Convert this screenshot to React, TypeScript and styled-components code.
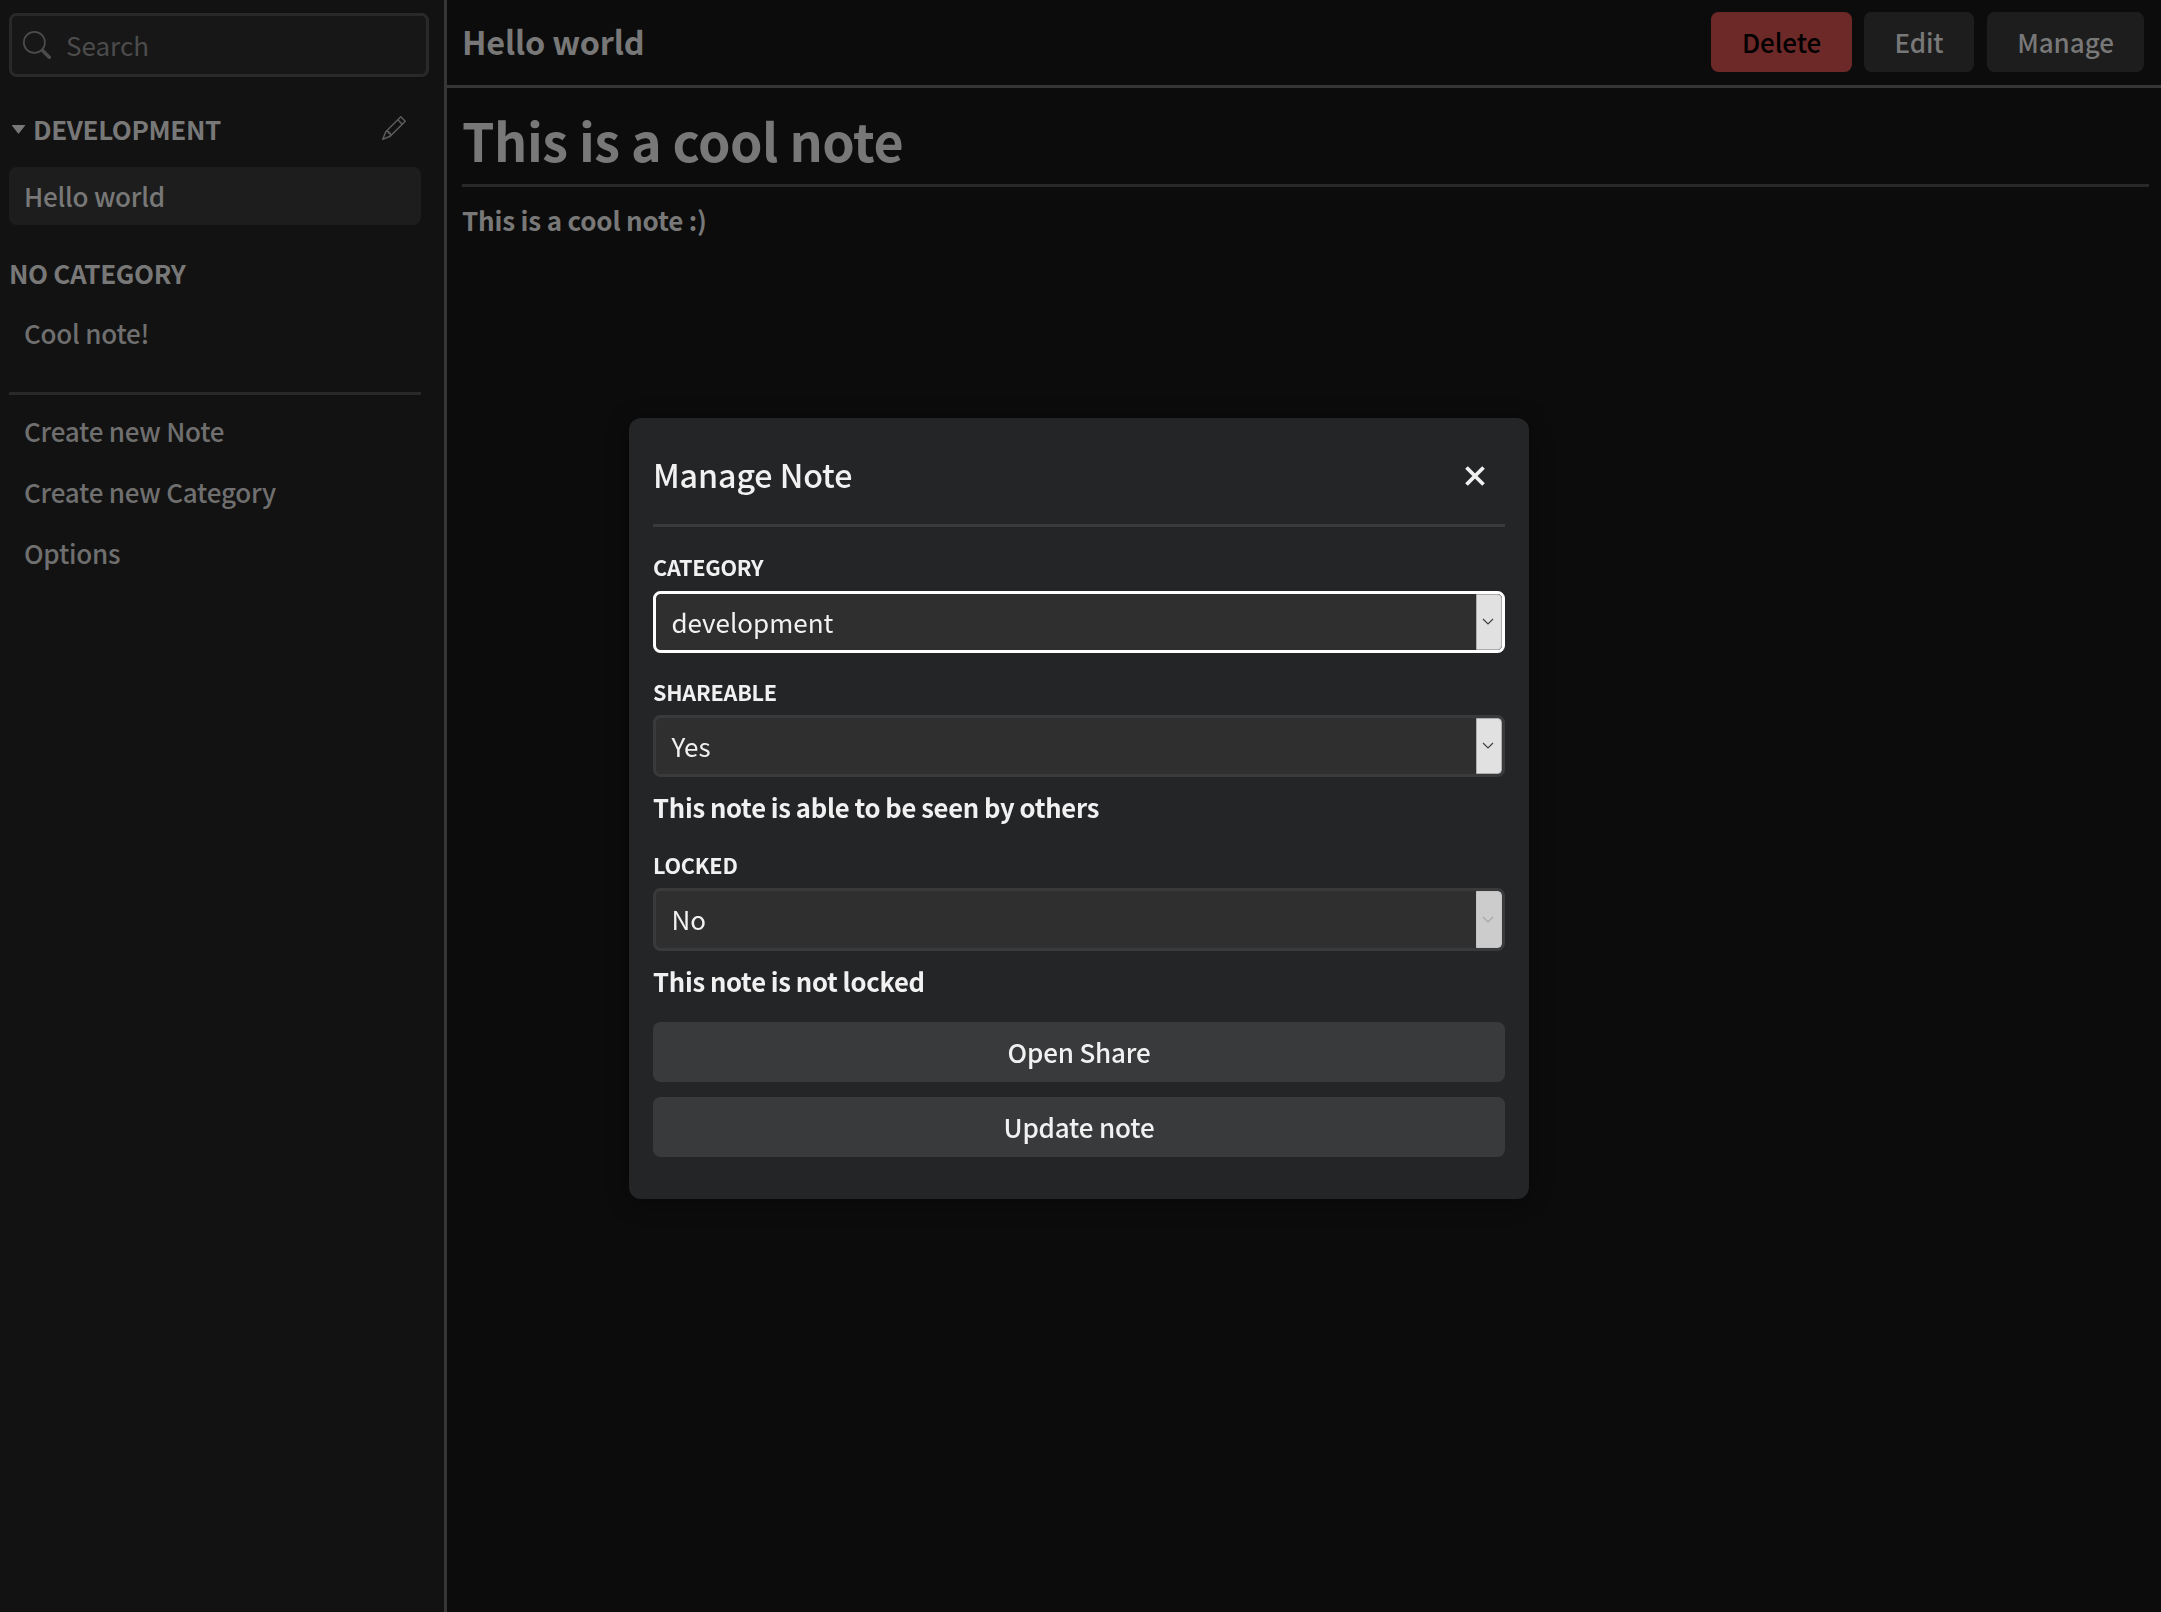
import React from "react";
import styled, { createGlobalStyle, css } from "styled-components";

const font = `"Noto Sans CJK JP", "Noto Sans", sans-serif`;

const GlobalStyle = createGlobalStyle`
  *, *::before, *::after { box-sizing: border-box; }
  html, body { margin: 0; padding: 0; background: #0c0c0c; }
  body { font-family: ${font}; font-size: 26px; color: #787878; overflow: hidden; }
  button, input, select { font: inherit; color: inherit; letter-spacing: inherit; }
  h1, h2, h3, p { margin: 0; }
`;

const Layout = styled.div`
  display: flex;
  height: 100vh;
`;

const Sidebar = styled.aside`
  width: 447px;
  flex: none;
  padding: 13px 15px 0 9px;
  background: #121212;
  border-right: 3px solid #363636;
`;

const SearchBox = styled.label`
  display: flex;
  align-items: center;
  height: 64px;
  padding-left: 11px;
  background: #171717;
  border: 3px solid #292929;
  border-radius: 7.5px;
  color: #4c4c4c;
`;

const SearchInput = styled.input`
  flex: 1;
  min-width: 0;
  margin-left: 15px;
  padding: 0 0 2px;
  height: 58px;
  border: 0;
  outline: 0;
  background: none;
  &::placeholder { color: #4c4c4c; opacity: 1; }
`;

const SidebarBody = styled.div`
  padding-right: 8px;
`;

const Category = styled.h3<{ $top: number }>`
  display: flex;
  align-items: center;
  height: 38px;
  margin-top: ${(p) => p.$top}px;
  font-size: 26px;
  line-height: 38px;
  font-weight: 700;
  letter-spacing: -0.37px;
  text-transform: uppercase;
`;

const Caret = styled.span`
  width: 14px;
  height: 9px;
  margin: 1px 7.5px 0 2.5px;
  background: #787878;
  clip-path: polygon(0 0, 100% 0, 50% 100%);
`;

const PencilButton = styled.button`
  display: flex;
  margin: 0 15px 2px auto;
  padding: 0;
  border: 0;
  background: none;
  color: #5c5c5c;
`;

const Item = styled.a<{ $active?: boolean; $top?: number }>`
  display: block;
  height: 58px;
  margin-top: ${(p) => p.$top ?? 3}px;
  padding-left: 15px;
  border-radius: 7.5px;
  line-height: 58px;
  font-weight: 500;
  letter-spacing: -0.23px;
  color: #6f6f6f;
  ${(p) => p.$active && css`
    background: #1d1d1d;
    color: #787878;
  `}
`;

const SidebarRule = styled.div`
  height: 3px;
  margin-top: 30px;
  background: #292929;
`;

const Main = styled.main`
  flex: 1;
  min-width: 0;
`;

const TopBar = styled.header`
  display: flex;
  align-items: flex-start;
  height: 88px;
  padding: 12px 17px 0 15px;
  border-bottom: 3px solid #363636;
`;

const NoteName = styled.h2`
  margin-right: auto;
  font-size: 32.4px;
  line-height: 57px;
  font-weight: 700;
  letter-spacing: -0.2px;
`;

const TopButton = styled.button<{ $width: number; $danger?: boolean; $gap?: number }>`
  width: ${(p) => p.$width}px;
  height: 60px;
  margin-left: ${(p) => p.$gap ?? 12}px;
  padding: 0 0 2px;
  border: 0;
  border-radius: 7.5px;
  font-weight: 500;
  letter-spacing: -0.07px;
  background: ${(p) => (p.$danger ? "#6d2828" : "#1d1d1d")};
  color: ${(p) => (p.$danger ? "#000" : "#787878")};
`;

const Article = styled.article`
  padding: 15px 12px 0 15px;
`;

const NoteTitle = styled.h1`
  height: 84px;
  border-bottom: 3px solid #292929;
  font-size: 52px;
  line-height: 74px;
  font-weight: 700;
  letter-spacing: -0.45px;
`;

const NoteText = styled.p`
  margin-top: 13px;
  line-height: 39px;
  font-weight: 700;
  letter-spacing: -0.2px;
`;

const Overlay = styled.div`
  position: fixed;
  inset: 0;
  padding-top: 418px;
`;

const Modal = styled.section`
  width: 900px;
  height: 781px;
  margin-left: 629px;
  padding: 24px 24px 0;
  border-radius: 12px;
  background: #242527;
  color: #f1f1f1;
  box-shadow: 0 3px 22px rgba(0, 0, 0, 0.4);
`;

const ModalHeader = styled.header`
  display: flex;
  align-items: center;
  justify-content: space-between;
  height: 85px;
  padding: 0 20px 14px 0;
  border-bottom: 3px solid #393a3c;
`;

const ModalTitle = styled.h2`
  padding-bottom: 5px;
  font-size: 32.2px;
  line-height: 48px;
  font-weight: 500;
  letter-spacing: -0.1px;
`;

const CloseButton = styled.button`
  display: flex;
  padding: 0;
  border: 0;
  background: none;
`;

const FieldLabel = styled.label<{ $top: number }>`
  display: block;
  margin-top: ${(p) => p.$top}px;
  font-size: 21.6px;
  line-height: 32px;
  font-weight: 700;
  letter-spacing: -0.23px;
  text-transform: uppercase;
`;

const SelectBox = styled.div<{ $focused?: boolean; $height?: number; $top?: number }>`
  display: flex;
  justify-content: space-between;
  height: ${(p) => p.$height ?? 62}px;
  margin-top: ${(p) => p.$top ?? 7}px;
  padding-left: 15.4px;
  border: 3px solid ${(p) => (p.$focused ? "#fff" : "#393a3c")};
  border-radius: 7.5px;
  background: #2f2f2f;
  line-height: 56px;
  overflow: hidden;
`;

const DropButton = styled.span<{ $disabled?: boolean }>`
  display: flex;
  align-items: center;
  justify-content: center;
  width: 26px;
  padding: 0 2px 1px 0;
  border: 1px solid ${(p) => (p.$disabled ? "#c4c4c4" : "#adadad")};
  border-radius: 0 4px 4px 0;
  background: ${(p) => (p.$disabled ? "#cccccc" : "#e1e1e1")};
  color: ${(p) => (p.$disabled ? "#a8a8a8" : "#404040")};
`;

const Hint = styled.p`
  margin-top: 10px;
  font-size: 25.6px;
  line-height: 40px;
  font-weight: 700;
  letter-spacing: -0.25px;
  word-spacing: -0.5px;
`;

const ModalButton = styled.button<{ $top: number }>`
  display: block;
  width: 100%;
  height: 60px;
  margin-top: ${(p) => p.$top}px;
  padding: 0 0 1px;
  border: 0;
  border-radius: 7.5px;
  background: #393a3c;
  font-weight: 500;
  letter-spacing: -0.18px;
`;

const SearchIcon = () => (
  <svg width="28" height="28" viewBox="0 0 16 16" fill="currentColor">
    <path d="M10.442 10.442a1 1 0 0 1 1.415 0l3.85 3.85a1 1 0 0 1-1.414 1.415l-3.85-3.85a1 1 0 0 1 0-1.415z" />
    <path d="M6.5 12a5.5 5.5 0 1 0 0-11 5.5 5.5 0 0 0 0 11zM13 6.5a6.5 6.5 0 1 1-13 0 6.5 6.5 0 0 1 13 0z" />
  </svg>
);

const PencilIcon = () => (
  <svg width="24" height="24" viewBox="0 0 16 16" fill="currentColor">
    <path d="M12.146.146a.5.5 0 0 1 .708 0l3 3a.5.5 0 0 1 0 .708l-10 10a.5.5 0 0 1-.168.11l-5 2a.5.5 0 0 1-.65-.65l2-5a.5.5 0 0 1 .11-.168zM11.207 2.5 13.5 4.793 14.793 3.5 12.5 1.207zm1.586 3L10.5 3.207 4 9.707V10h.5a.5.5 0 0 1 .5.5v.5h.5a.5.5 0 0 1 .5.5v.5h.293zm-9.761 5.175-.106.106-1.528 3.821 3.821-1.528.106-.106A.5.5 0 0 1 5 12.5V12h-.5a.5.5 0 0 1-.5-.5V11h-.5a.5.5 0 0 1-.468-.325" />
  </svg>
);

const CloseIcon = () => (
  <svg width="20" height="20" viewBox="0 0 20 20" fill="none" stroke="currentColor" strokeWidth="3.8">
    <path d="M1.5 1.5l17 17M18.5 1.5l-17 17" />
  </svg>
);

const ChevronIcon = () => (
  <svg width="12" height="7" viewBox="0 0 12 7" fill="none" stroke="currentColor" strokeWidth="1.2">
    <path d="M1 1l5 5 5-5" />
  </svg>
);

interface SelectProps {
  value: string;
  focused?: boolean;
  disabled?: boolean;
  height?: number;
  top?: number;
}

function Select({ value, focused, disabled, height, top }: SelectProps) {
  return (
    <SelectBox $focused={focused} $height={height} $top={top}>
      {value}
      <DropButton $disabled={disabled}>
        <ChevronIcon />
      </DropButton>
    </SelectBox>
  );
}

export default function App() {
  return (
    <>
      <GlobalStyle />
      <Layout>
        <Sidebar>
          <SearchBox>
            <SearchIcon />
            <SearchInput placeholder="Search" />
          </SearchBox>
          <SidebarBody>
            <Category $top={33}>
              <Caret />
              development
              <PencilButton aria-label="Edit category">
                <PencilIcon />
              </PencilButton>
            </Category>
            <Item $active $top={19}>Hello world</Item>
            <Category $top={29}>No category</Category>
            <Item $top={12}>Cool note!</Item>
            <SidebarRule />
            <Item $top={7}>Create new Note</Item>
            <Item>Create new Category</Item>
            <Item>Options</Item>
          </SidebarBody>
        </Sidebar>
        <Main>
          <TopBar>
            <NoteName>Hello world</NoteName>
            <TopButton $danger $width={141}>Delete</TopButton>
            <TopButton $width={110}>Edit</TopButton>
            <TopButton $width={157} $gap={13}>Manage</TopButton>
          </TopBar>
          <Article>
            <NoteTitle>This is a cool note</NoteTitle>
            <NoteText>This is a cool note :)</NoteText>
          </Article>
        </Main>
      </Layout>
      <Overlay>
        <Modal>
          <ModalHeader>
            <ModalTitle>Manage Note</ModalTitle>
            <CloseButton aria-label="Close">
              <CloseIcon />
            </CloseButton>
          </ModalHeader>
          <FieldLabel $top={24}>Category</FieldLabel>
          <Select value="development" focused top={8} />
          <FieldLabel $top={23}>Shareable</FieldLabel>
          <Select value="Yes" />
          <Hint>This note is able to be seen by others</Hint>
          <FieldLabel $top={22}>Locked</FieldLabel>
          <Select value="No" disabled height={63} />
          <Hint>This note is not locked</Hint>
          <ModalButton $top={21}>Open Share</ModalButton>
          <ModalButton $top={15}>Update note</ModalButton>
        </Modal>
      </Overlay>
    </>
  );
}
